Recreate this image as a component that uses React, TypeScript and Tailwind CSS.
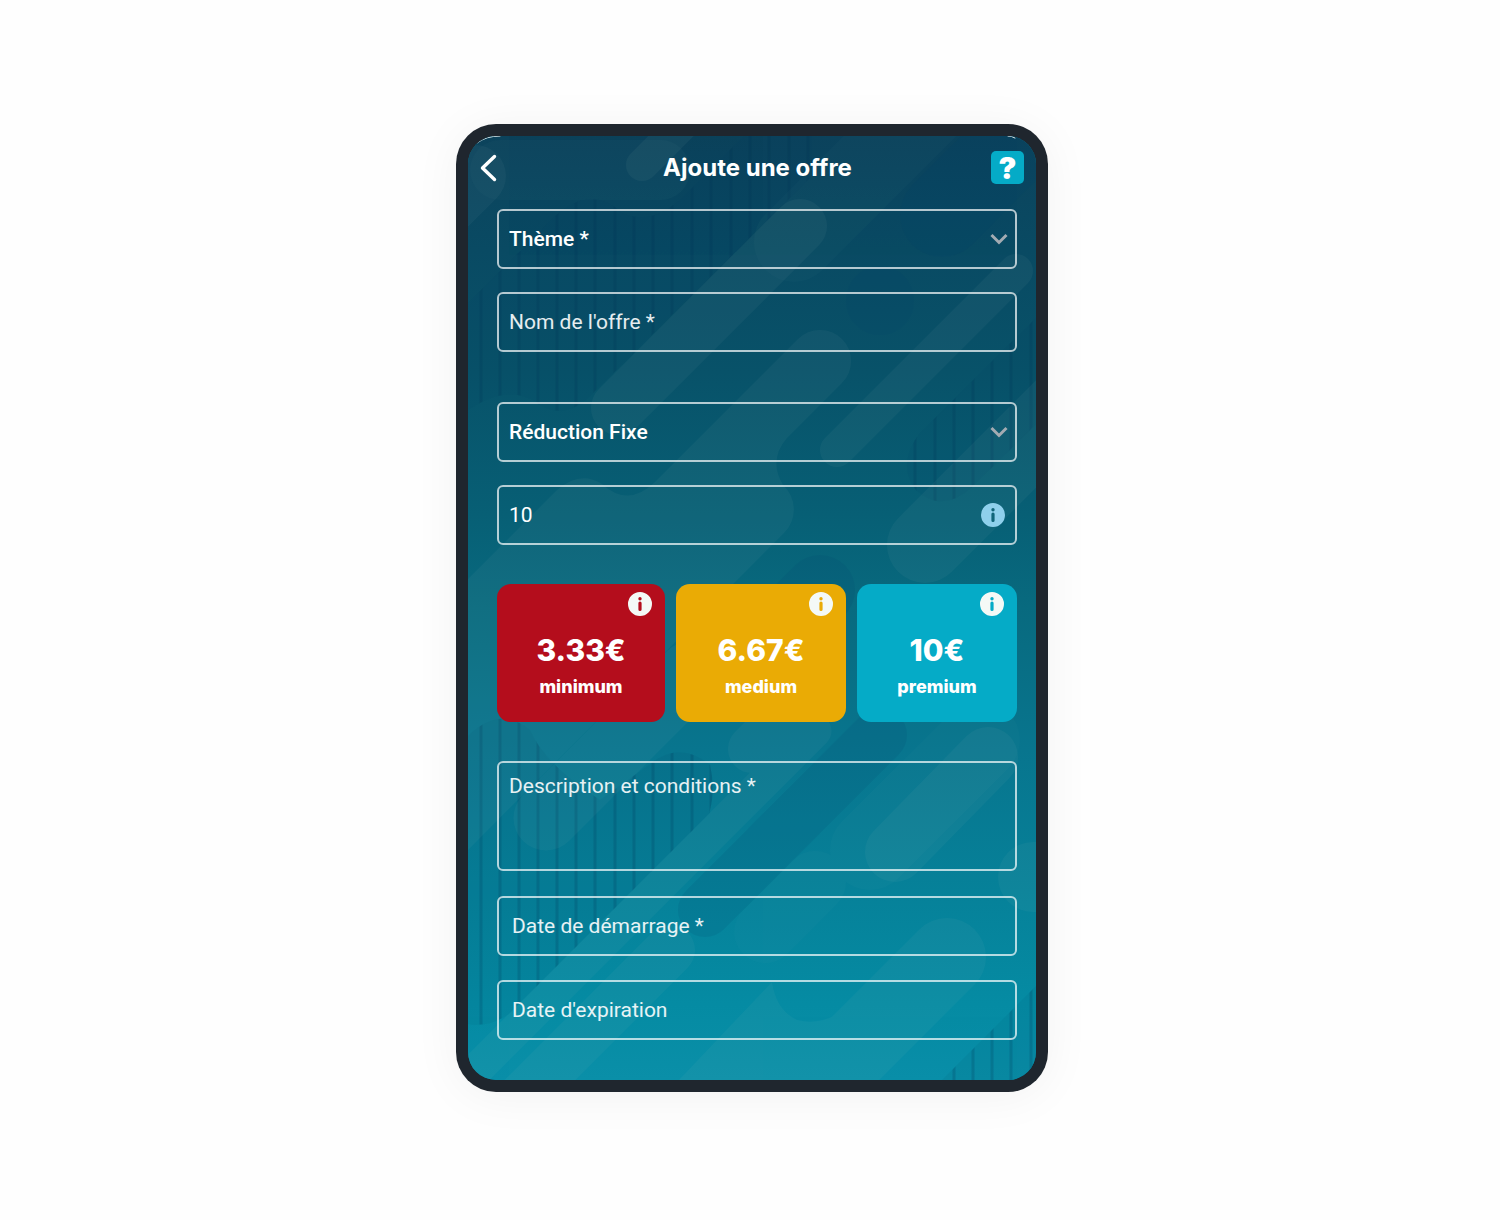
import React from "react";

const STRIPES = [
  481, 500, 519, 538, 557, 576, 595, 615, 634, 653, 672, 692, 711, 731, 750, 769, 789, 808, 915,
  935, 954, 973, 992, 1011, 1031,
];

const STRIPED_AREAS =
  "M468 303L540 232Q585 178 622 213Q650 226 680 200L744 136H812V176L587 399Q560 422 533 400Q505 385 468 410Z " +
  "M1036 318L920 433Q896 464 916 490Q942 514 972 487L1036 424Z " +
  "M468 736Q500 705 530 730Q545 765 600 800L650 764Q680 740 710 765Q716 790 709 814L510 1013Q490 1028 468 1024Z " +
  "M942 1080L1036 986V1080Z";

function Backdrop() {
  return (
    <svg
      viewBox="468 136 568 944"
      preserveAspectRatio="xMidYMid slice"
      aria-hidden="true"
      className="absolute inset-0 h-full w-full"
      fill="none"
      strokeLinecap="round"
    >
      <defs>
        <linearGradient id="sea" x1="0" y1="0" x2="0" y2="1">
          <stop offset="0" stopColor="#0c435c" />
          <stop offset="0.12" stopColor="#094a63" />
          <stop offset="0.25" stopColor="#085269" />
          <stop offset="0.4" stopColor="#075f75" />
          <stop offset="0.5" stopColor="#086a7f" />
          <stop offset="0.65" stopColor="#08758e" />
          <stop offset="0.8" stopColor="#068199" />
          <stop offset="0.92" stopColor="#058ba3" />
          <stop offset="1" stopColor="#0a8fa8" />
        </linearGradient>
        <clipPath id="striped">
          <path d={STRIPED_AREAS} />
        </clipPath>
      </defs>
      <rect x="468" y="136" width="568" height="944" fill="url(#sea)" />
      <path d={STRIPED_AREAS} fill="#00406a" fillOpacity="0.08" />
      <g clipPath="url(#striped)" stroke="#003457" strokeOpacity="0.2" strokeWidth="3">
        {STRIPES.map((x) => (
          <path key={x} d={`M${x} 130V1090`} />
        ))}
      </g>
      <g stroke="#00406c" opacity="0.12">
        <path d="M942 215L1030 127" strokeWidth="84" />
        <path d="M880 300L880 301" strokeWidth="68" />
        <path d="M820 590L760 650" strokeWidth="70" />
        <path d="M880 735L705 910" strokeWidth="54" />
      </g>
      <g stroke="#b4cdc6" opacity="0.025">
        <path d="M794 242L960 76" strokeWidth="80" />
        <path d="M500 170L660 170" strokeWidth="60" />
        <path d="M815 882L765 932" strokeWidth="62" />
        <path d="M870 850L980 740" strokeWidth="80" />
      </g>
      <g stroke="#b4cdc6" opacity="0.05">
        <path d="M800 226L618 408" strokeWidth="54" />
        <path
          d="M798 339A31 31 0 0 1 842 383L787 438Q768 460 783 485A33 33 0 0 1 784 533L468 850V579L557 490Q580 470 602 484Q628 508 655 482Z"
          fill="#b4cdc6"
          stroke="none"
        />
        <path d="M1016 271L837 450" strokeWidth="34" />
        <path d="M475 176L420 231" strokeWidth="62" />
        <path d="M642 165L700 107" strokeWidth="32" />
        <path d="M925 545L1070 400" strokeWidth="76" />
        <path d="M546 818L690 674" strokeWidth="65" />
        <path d="M752 749L790 711" strokeWidth="48" />
        <path d="M815 731L440 1106" strokeWidth="33" />
        <path d="M988 757L895 852" strokeWidth="60" />
        <path d="M947 957L820 1084" strokeWidth="78" />
        <path
          d="M772 982Q776 1010 797 1020Q820 1026 843 1011L900 1000L820 1100H660Z"
          fill="#b4cdc6"
          stroke="none"
        />
        <path d="M1040 877L1033 877" strokeWidth="70" />
        <path d="M670 950L520 1100" strokeWidth="50" />
      </g>
      <path d="M477 143Q486 136 500 136M1008 136Q1012 136 1015 138" stroke="#dfe8ea" strokeWidth="1" />
    </svg>
  );
}

function InfoIcon({ className }: { className: string }) {
  return (
    <svg viewBox="0 0 24 24" aria-hidden="true" className={className}>
      <path
        fill="currentColor"
        fillRule="evenodd"
        d="M12 0a12 12 0 1 1 0 24a12 12 0 0 1 0-24ZM12 5a1.7 1.7 0 1 0 0 3.4a1.7 1.7 0 0 0 0-3.4ZM12 9.4a1.6 1.6 0 0 0-1.6 1.6v6.4a1.6 1.6 0 0 0 3.2 0V11A1.6 1.6 0 0 0 12 9.4Z"
      />
    </svg>
  );
}

const BOX =
  "block w-full rounded-md border-2 border-white/70 bg-transparent px-[10px] text-[21px] text-white outline-none placeholder:text-white/90 placeholder:opacity-100";

function SelectField({ label, options }: { label: string; options: string[] }) {
  return (
    <div className="relative">
      <select aria-label={label} className={`${BOX} h-[60px] appearance-none pt-[2px] font-medium`}>
        {options.map((o) => (
          <option key={o}>{o}</option>
        ))}
      </select>
      <svg
        viewBox="0 0 18 12"
        aria-hidden="true"
        className="pointer-events-none absolute top-6 right-[9px] w-[18px] text-[#a3abb2]"
        fill="none"
        stroke="currentColor"
        strokeWidth="3"
      >
        <path d="M1.5 2L9 9.5L16.5 2" />
      </svg>
    </div>
  );
}

function TextField({ label, value, inset }: { label: string; value?: string; inset?: boolean }) {
  return (
    <input
      type="text"
      aria-label={label}
      placeholder={label}
      defaultValue={value}
      className={`${BOX} h-[60px] ${inset ? "pl-[13px]" : ""}`}
    />
  );
}

const TIERS = [
  { price: "3.33€", name: "minimum", color: "bg-[#b40d1c]" },
  { price: "6.67€", name: "medium", color: "bg-[#eaab05]" },
  { price: "10€", name: "premium", color: "bg-[#05abc7]" },
];

export default function App() {
  return (
    <main className="flex min-h-screen items-start justify-center bg-[#fefefe] py-[124px] pl-1 font-[Roboto,sans-serif]">
      <div className="w-full max-w-[592px] rounded-[40px] bg-[#1f262e] p-3 shadow-[0_4px_48px_rgba(0,0,0,0.05)]">
        <div className="relative overflow-hidden rounded-[28px] bg-[#07738c]">
          <Backdrop />
          <div className="relative">
            <header className="flex h-[63px] items-center justify-between pr-3 pl-3">
              <button type="button" aria-label="Retour" className="flex w-11 text-white">
                <svg
                  viewBox="0 0 17 28"
                  aria-hidden="true"
                  className="h-7"
                  fill="none"
                  stroke="currentColor"
                  strokeWidth="3.4"
                  strokeLinecap="round"
                  strokeLinejoin="round"
                >
                  <path d="M14.5 2.5L2.5 14L14.5 25.5" />
                </svg>
              </button>
              <h1 className="font-[Inter,sans-serif] text-2xl font-bold text-white">Ajoute une offre</h1>
              <button
                type="button"
                aria-label="Aide"
                className="flex size-[33px] items-center justify-center rounded-[5px] bg-[#05abc7] font-[Inter,sans-serif] text-[30px] leading-none font-black text-white"
              >
                ?
              </button>
            </header>

            <form className="flex flex-col pt-[10px] pr-[19px] pb-10 pl-[29px]">
              <div className="flex flex-col gap-[23px]">
                <SelectField label="Thème" options={["Thème *"]} />
                <TextField label="Nom de l'offre *" />
              </div>

              <div className="mt-[50px] flex flex-col gap-[23px]">
                <SelectField label="Type de réduction" options={["Réduction Fixe"]} />
                <div className="relative">
                  <TextField label="Montant" value="10" />
                  <button
                    type="button"
                    aria-label="Informations sur le montant"
                    className="absolute top-[18px] right-3 text-[#8fd0ec]"
                  >
                    <InfoIcon className="size-6" />
                  </button>
                </div>
              </div>

              <div className="mt-[39px] grid grid-cols-[168fr_170fr_160fr] gap-[11px]">
                {TIERS.map((t) => (
                  <section
                    key={t.name}
                    className={`relative flex h-[138px] flex-col items-center rounded-[14px] pt-12 font-[Inter,sans-serif] font-extrabold text-white ${t.color}`}
                  >
                    <button
                      type="button"
                      aria-label={`Informations ${t.name}`}
                      className="absolute top-2 right-[13px] text-[#f4f9f6]"
                    >
                      <InfoIcon className="size-6" />
                    </button>
                    <p className="text-[30px] leading-9">{t.price}</p>
                    <p className="mt-[7px] text-lg leading-6">{t.name}</p>
                  </section>
                ))}
              </div>

              <textarea
                aria-label="Description et conditions"
                placeholder="Description et conditions *"
                className={`${BOX} mt-[39px] h-[110px] resize-none pt-2`}
              />

              <div className="mt-[25px] flex flex-col gap-6">
                <TextField label="Date de démarrage *" inset />
                <TextField label="Date d'expiration" inset />
              </div>
            </form>
          </div>
        </div>
      </div>
    </main>
  );
}
